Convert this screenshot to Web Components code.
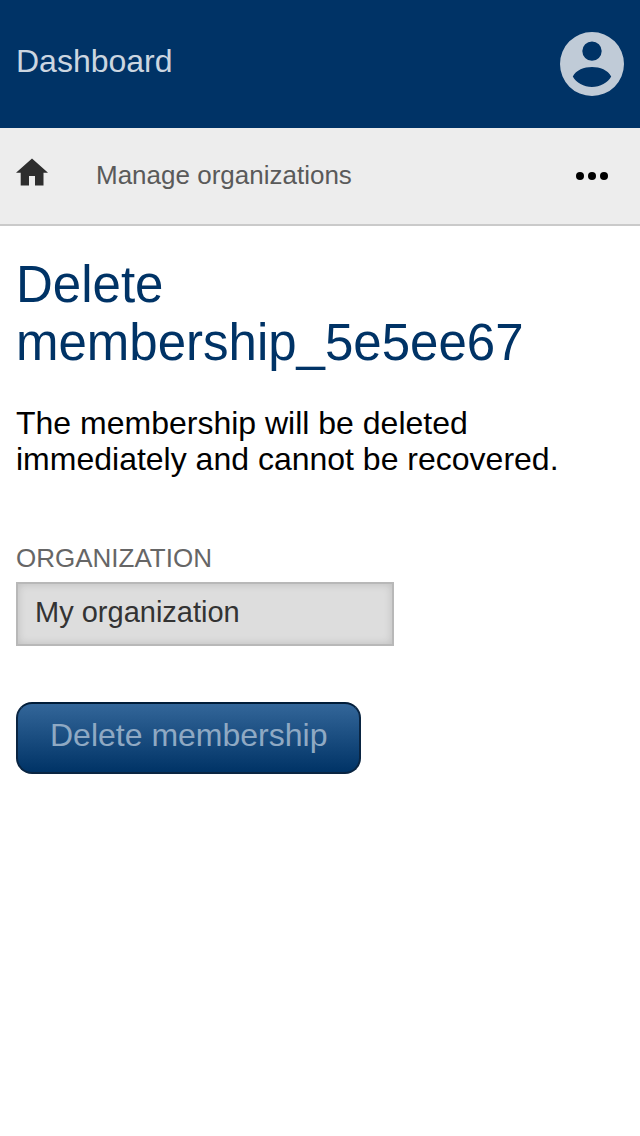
<!DOCTYPE html>
<html lang="en">
<head>
<meta charset="utf-8">
<meta name="viewport" content="width=device-width">
<title>Delete membership</title>
<style>
body { margin: 0; background: #fff; color: #000; font: 32px/36px "Liberation Sans", Arial, sans-serif; }
</style>
</head>
<body>
<app-header>Dashboard</app-header>
<crumb-bar>Manage organizations</crumb-bar>
<page-content heading="Delete membership_5e5ee67">
  <span slot="message">The membership will be deleted immediately and cannot be recovered.</span>
  <text-field label="Organization" value="My organization"></text-field>
  <action-button>Delete membership</action-button>
</page-content>
<script>
function define(name, render) {
  customElements.define(name, class extends HTMLElement {
    constructor() {
      super();
      this.attachShadow({ mode: "open" }).innerHTML = render(this);
    }
  });
}

define("app-header", () => `
<style>
:host { display: block; background: #003366; }
header { display: flex; align-items: center; justify-content: space-between; padding: 32px 16px; }
a { color: #ccd6e0; text-decoration: none; padding-bottom: 6px; }
button { display: block; border: 0; padding: 0; background: none; color: #c0cbd7; }
svg { display: block; width: 64px; height: 64px; }
</style>
<header>
  <a href="#"><slot></slot></a>
  <button type="button" aria-label="Account">
    <svg viewBox="0 0 64 64" aria-hidden="true"><path fill="currentColor" fill-rule="evenodd" d="M32 0a32 32 0 1 0 0 64a32 32 0 1 0 0-64zM32 9.400a9.700 9.700 0 1 1 0 19.400a9.700 9.700 0 1 1 0-19.400zM12.800 44.600C16 38 24 35 32 35s16 3 19.200 9.600C48 51 40 55 32 55s-16-4-19.200-10.400z"/></svg>
  </button>
</header>`);

define("crumb-bar", () => `
<style>
:host { display: block; background: #ededed; border-bottom: 2px solid #cacaca; font-size: 26px; line-height: 32px; }
nav { display: flex; align-items: center; padding: 30px 32px 30px 16px; }
a { color: #5a5a5a; text-decoration: none; padding-bottom: 2px; }
.home { color: #2e2e2e; margin-right: 48px; padding-bottom: 8px; }
button { border: 0; padding: 0; background: none; color: #000; margin-left: auto; }
svg { display: block; width: 32px; }
</style>
<nav aria-label="Breadcrumb">
  <a class="home" href="#" aria-label="Home"><svg viewBox="0 0 32 28" aria-hidden="true"><path fill="currentColor" d="M16 .4L32 14.800H27.500V27.500H19V18H13V27.500H4.700V14.800H0z"/></svg></a>
  <a href="#"><slot></slot></a>
  <button type="button" aria-label="More"><svg viewBox="0 0 32 8" aria-hidden="true"><circle cx="4" cy="4" r="4"/><circle cx="16" cy="4" r="4"/><circle cx="28" cy="4" r="4"/></svg></button>
</nav>`);

define("page-content", el => `
<style>
:host { display: block; }
main { display: flex; flex-direction: column; align-items: flex-start; padding: 30px 16px; }
h1 { margin: 0 0 33px; font-size: 51px; line-height: 58px; font-weight: 400; color: #003366; }
p { margin: 0 0 65px; }
form { display: flex; flex-direction: column; align-items: flex-start; gap: 56px; width: 100%; }
</style>
<main>
  <h1>${el.getAttribute("heading")}</h1>
  <p><slot name="message"></slot></p>
  <form><slot></slot></form>
</main>`);

define("text-field", el => `
<style>
:host { display: flex; flex-direction: column; max-width: 378px; width: 100%; }
label { color: #666; font-size: 26px; line-height: 32px; text-transform: uppercase; margin-bottom: 8px; }
input { box-sizing: border-box; width: 100%; height: 64px; margin: 0; padding: 0 17px 4px; border: 2px solid #b8b8b8; border-radius: 0; background: #ddd; color: #333; font-family: inherit; font-size: 29px; box-shadow: inset 0 0 8px rgba(0, 0, 0, .15); }
</style>
<label for="field">${el.getAttribute("label")}</label>
<input id="field" type="text" value="${el.getAttribute("value")}" readonly>`);

define("action-button", () => `
<style>
:host { display: block; }
button { display: block; margin: 0; padding: 13px 32px 19px; border: 2px solid #0a2542; border-top-color: #001c38; border-radius: 16px; background: linear-gradient(#336699, #003366); color: #8fa9c3; font: inherit; }
</style>
<button type="submit"><slot></slot></button>`);
</script>
</body>
</html>
